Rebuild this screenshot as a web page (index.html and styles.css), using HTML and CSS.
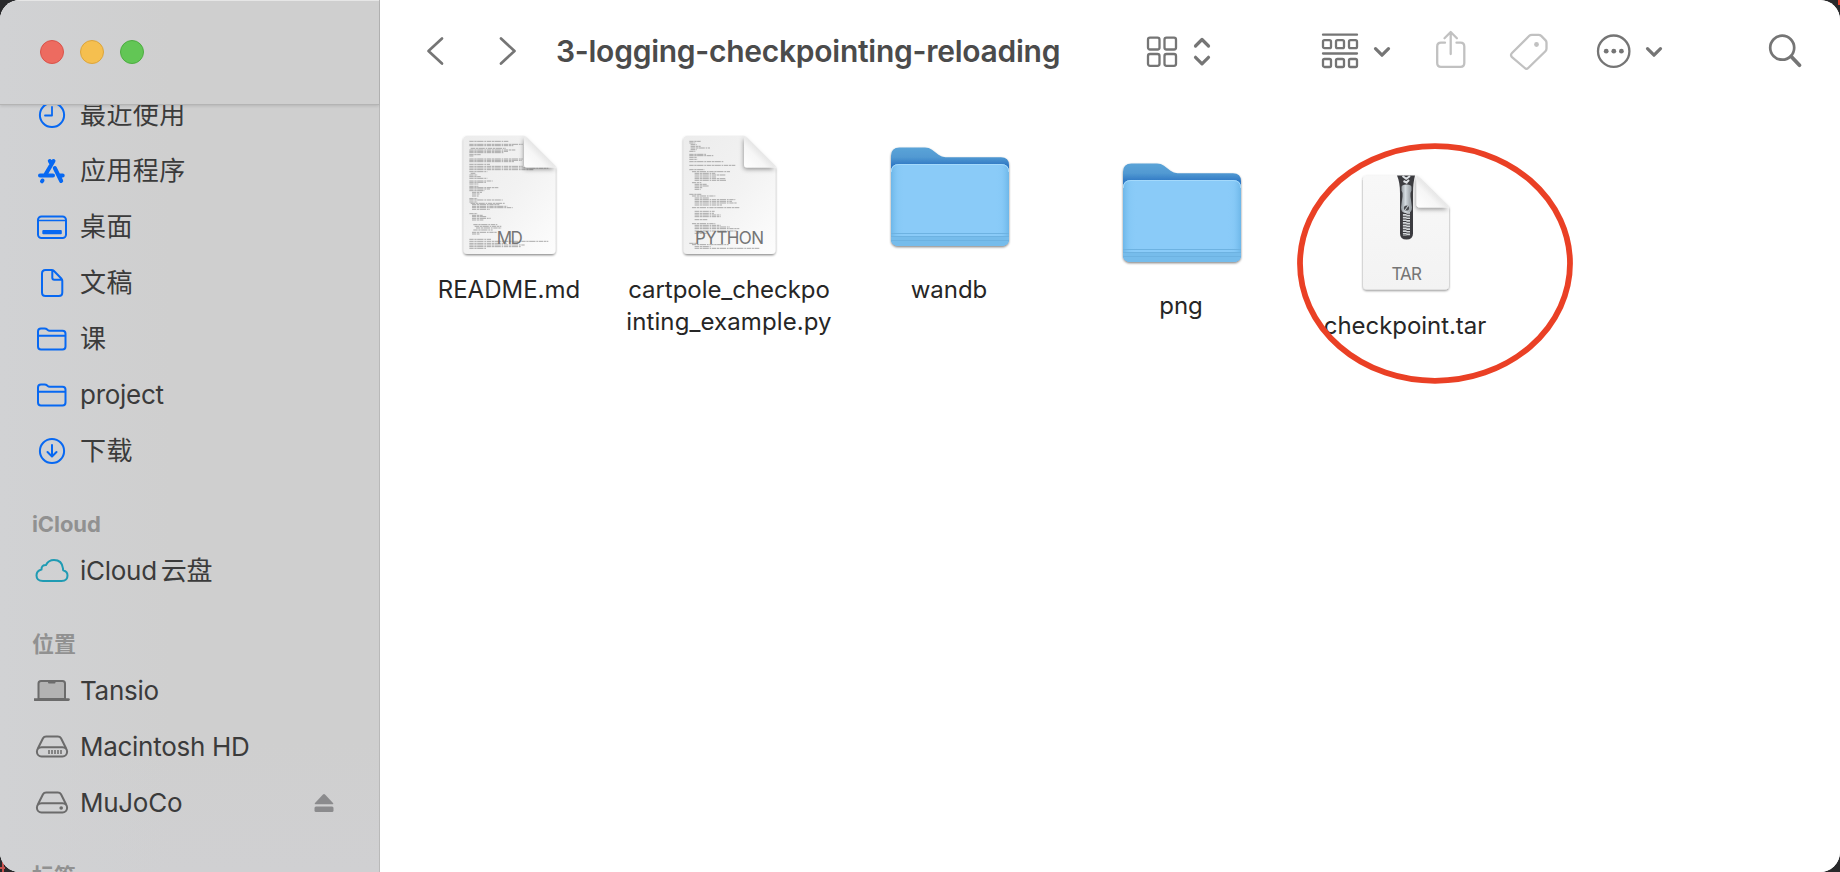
FILE: index.html
```html
<!DOCTYPE html>
<html lang="zh-CN">
<head>
<meta charset="utf-8">
<title>3-logging-checkpointing-reloading</title>
<link rel="stylesheet" href="styles.css">
</head>
<body>
<svg class="defs" width="0" height="0" aria-hidden="true">
  <defs>
    <linearGradient id="paper" x1="0" y1="0" x2="1" y2="1"><stop offset="0" stop-color="#ececec"/><stop offset=".5" stop-color="#f2f2f2"/><stop offset="1" stop-color="#fdfdfd"/></linearGradient>
    <linearGradient id="paperLight" x1="0" y1="0" x2="0" y2="1"><stop offset="0" stop-color="#f8f8f8"/><stop offset="1" stop-color="#f3f3f3"/></linearGradient>
    <linearGradient id="curl" x1="0" y1="1" x2=".6" y2=".4"><stop offset="0" stop-color="#ffffff"/><stop offset=".6" stop-color="#f6f6f6"/><stop offset="1" stop-color="#dedede"/></linearGradient>
    <linearGradient id="folderBack" x1="0" y1="0" x2="0" y2="1"><stop offset="0" stop-color="#5ba4d8"/><stop offset=".1" stop-color="#5199d2"/><stop offset=".18" stop-color="#2f78c4"/><stop offset="1" stop-color="#3b82c4"/></linearGradient>
    <linearGradient id="folderEdge" x1="0" y1="0" x2="1" y2="0"><stop offset="0" stop-color="#5aa9de" stop-opacity=".6"/><stop offset=".06" stop-color="#7cc3f2" stop-opacity=".3"/><stop offset=".12" stop-color="#8acbf8" stop-opacity="0"/><stop offset=".88" stop-color="#8acbf8" stop-opacity="0"/><stop offset=".94" stop-color="#7cc3f2" stop-opacity=".3"/><stop offset="1" stop-color="#5aa9de" stop-opacity=".6"/></linearGradient>
    <linearGradient id="metal" x1="0" y1="0" x2="1" y2="0"><stop offset="0" stop-color="#8e9499"/><stop offset=".4" stop-color="#d5dce1"/><stop offset="1" stop-color="#8b9196"/></linearGradient>
    <filter id="drop" x="-10%" y="-10%" width="120%" height="125%"><feDropShadow dx="0" dy="1.2" stdDeviation="1.1" flood-color="#000" flood-opacity=".48"/></filter>
    <filter id="soft" x="-30%" y="-30%" width="160%" height="170%"><feDropShadow dx="-.5" dy="2" stdDeviation="2" flood-color="#000" flood-opacity=".38"/></filter>
    <symbol id="folder" viewBox="0 0 128 128">
      <g filter="url(#drop)">
        <path d="M6 24q0-8.500 8.500-8.500H40q4 0 7 2.300l6.500 5q3 2.400 7 2.400h55.500q8 0 8 8V106q0 8-8 8H14q-8 0-8-8z" fill="url(#folderBack)"/>
        <path d="M6 40q0-8 8-8h102q8 0 8 8v66q0 8-8 8H14q-8 0-8-8z" fill="#8acbf8"/>
      </g>
      <path d="M6 40q0-8 8-8h102q8 0 8 8v66q0 8-8 8H14q-8 0-8-8z" fill="url(#folderEdge)"/>
      <path d="M6.300 40q0-7.500 7.700-7.500h102q7.700 0 7.700 7.500" fill="none" stroke="#a4d9fb" stroke-width="1"/>
      <path d="M6 104h118v2q0 8-8 8H14q-8 0-8-8z" fill="#76bceb"/>
      <path d="M6 101.500h118M6 104.500h118M6 108.500h118" stroke="#6db2e1" stroke-width="1"/>
    </symbol>
    <symbol id="drive" viewBox="0 0 36 28">
      <path d="M3.600 16 9 5.300Q10 3.400 12.200 3.400h11.600Q26 3.400 27 5.300L32.400 16M7.500 14.200h21a4.600 4.600 0 0 1 0 9.200h-21a4.600 4.600 0 0 1 0-9.200z" fill="none" stroke="currentColor" stroke-width="2"/>
    </symbol>
    <symbol id="dir" viewBox="0 0 36 28">
      <path d="M4 20.200V6.500Q4 3.500 7 3.500h3.500q1.600 0 2.700 1l.5.500q.8.700 2 .7H28.500q3 0 3 3v12.700q0 3-3 3H7q-3 0-3-3zM4 10.800h27.500" fill="none" stroke="currentColor" stroke-width="2"/>
    </symbol>
  </defs>
</svg>

<div class="window">
  <aside class="sidebar">
    <header class="titlebar">
      <span class="light close"></span><span class="light minimise"></span><span class="light maximise"></span>
    </header>
    <nav class="places">
      <div class="list">
        <a class="row zh"><svg class="ico" viewBox="0 0 36 28"><circle cx="18" cy="14" r="12.100" fill="none" stroke="currentColor" stroke-width="2"/><path d="M18 6v8.500h-7" fill="none" stroke="currentColor" stroke-width="1.800" stroke-linecap="round" stroke-linejoin="round"/></svg>最近使用</a>
        <a class="row zh"><svg class="ico" viewBox="0 0 36 28"><g fill="none" stroke="currentColor" stroke-width="4" stroke-linecap="round"><path d="M19.500 4 11.200 18M15.800 4l1.800 3M20.800 11 27.200 24M6 18.400h13M25.500 18.400h3.200M8.500 23.500l-.5.800"/></g></svg>应用程序</a>
        <a class="row zh"><svg class="ico" viewBox="0 0 36 28"><rect x="4" y="3.500" width="28" height="21.500" rx="3.500" fill="none" stroke="currentColor" stroke-width="2"/><path d="M4 7.500h28" stroke="currentColor" stroke-width="1.600"/><rect x="8.300" y="17" width="19.500" height="4.300" rx="1" fill="currentColor"/></svg>桌面</a>
        <a class="row zh"><svg class="ico" viewBox="0 0 36 28"><path d="M8 4.500Q8 1 11.500 1h6.200q1.300 0 2.300 1l7.300 7.500q1 1 1 2.300v11.700q0 3.500-3.500 3.500H11.500Q8 27 8 23.500zM18.300 1.500v7.300q0 2 2 2H28" fill="none" stroke="currentColor" stroke-width="2"/></svg>文稿</a>
        <a class="row zh"><svg class="ico"><use href="#dir"/></svg>课</a>
        <a class="row"><svg class="ico"><use href="#dir"/></svg>project</a>
        <a class="row zh"><svg class="ico" viewBox="0 0 36 28"><g fill="none" stroke="currentColor" stroke-width="2" stroke-linecap="round" stroke-linejoin="round"><circle cx="18" cy="14" r="12.100"/><path d="M18 8v11.300M13.500 15l4.500 4.500 4.500-4.500"/></g></svg>下载</a>
        <h2 class="heading">iCloud</h2>
        <a class="row cloud"><svg class="ico" viewBox="0 0 36 28"><path d="M9 24q-6.500 0-6.500-5.500 0-4.800 5-6-.2-4.500 4.500-4.500Q14.500 3 20 3q8 0 9 8.500 0 1 .2 1.800Q33.500 14.500 33.500 18.500q0 5.500-6 5.500z" fill="none" stroke="currentColor" stroke-width="2" stroke-linejoin="round"/></svg><span>iCloud</span><span class="han">云盘</span></a>
        <h2 class="heading">位置</h2>
        <a class="row device"><svg class="ico" viewBox="0 0 36 28"><path d="M4.500 22V6.500q0-2.500 2.500-2.500h21.500q2.500 0 2.500 2.500V22z" fill="#b2b2b2" stroke="currentColor" stroke-width="2"/><path d="M14 4h7.500v1.500q0 1-1 1H15q-1 0-1-1z" fill="currentColor"/><path d="M.5 22.600h34" stroke="currentColor" stroke-width="2.600" stroke-linecap="round"/></svg>Tansio</a>
        <a class="row device"><svg class="ico" viewBox="0 0 36 28"><use href="#drive"/><path d="M15 17v4M18 17v4M21 17v4M24 17v4M27 17v4" stroke="currentColor" stroke-width="1.500"/></svg>Macintosh HD</a>
        <a class="row device"><svg class="ico" viewBox="0 0 36 28"><use href="#drive"/><circle cx="27.200" cy="19" r="1.800" fill="currentColor"/></svg>MuJoCo<svg class="eject" viewBox="0 0 20 20"><path d="M9 1.500q1-1 2 0l8 8.500q1 1.300-.6 1.300H1.600Q0 11.300 1 10z"/><rect x=".5" y="13.500" width="19" height="5.500" rx="1.500"/></svg></a>
        <h2 class="heading">标签</h2>
      </div>
    </nav>
  </aside>

  <main class="browser">
    <header class="toolbar">
      <svg class="tool nav back" width="20" height="44" viewBox="0 0 20 44"><path d="M17 9.500 3.500 22 17 34.500"/></svg>
      <svg class="tool nav forward" width="20" height="44" viewBox="0 0 20 44"><path d="M3 9.500 16.500 22 3 34.500"/></svg>
      <h1 class="title">3-logging-checkpointing-reloading</h1>
      <svg class="tool grid" width="34" height="44" viewBox="0 0 34 44"><rect x="3" y="8.700" width="11.500" height="11.800" rx="2"/><rect x="19.500" y="8.700" width="11.500" height="11.800" rx="2"/><rect x="3" y="25" width="11.500" height="11.800" rx="2"/><rect x="19.500" y="25" width="11.500" height="11.800" rx="2"/></svg>
      <svg class="tool thick updown" width="20" height="44" viewBox="0 0 20 44"><path d="m3.500 17 6.500-6.500 6.500 6.500M3.500 28.300l6.500 6.500 6.500-6.500"/></svg>
      <svg class="tool group" width="40" height="44" viewBox="0 0 40 44"><path d="M3 5.700h34M3 24.500h34"/><g><rect x="3" y="11.200" width="8" height="8" rx="1.500"/><rect x="16" y="11.200" width="8" height="8" rx="1.500"/><rect x="29" y="11.200" width="8" height="8" rx="1.500"/><rect x="3" y="30" width="8" height="8" rx="1.500"/><rect x="16" y="30" width="8" height="8" rx="1.500"/><rect x="29" y="30" width="8" height="8" rx="1.500"/></g></svg>
      <svg class="tool thick drop1" width="20" height="44" viewBox="0 0 20 44"><path d="m3.500 19.700 6.500 6.500 6.500-6.500"/></svg>
      <svg class="tool faint share" width="33" height="44" viewBox="0 0 33 44"><path d="M11 13.700H7q-3.800 0-3.800 3.800V34q0 3.800 3.800 3.800h19.500q3.800 0 3.800-3.800V17.500q0-3.800-3.800-3.800h-4M16.700 25V4M10.500 9.200l6.200-6.200 6.200 6.200"/></svg>
      <svg class="tool faint tag" width="42" height="44" viewBox="0 0 42 44"><path d="M3.700 27.800q-1.500-2 .3-3.800L21.300 6.800q1-1 2.600-1h6.600q1.600 0 2.700 1.100l4.200 4.200q1.100 1.100 1.100 2.700v5.700q0 1.600-1.100 2.700L20.200 39q-1.700 1.700-3.400 0z"/><circle class="dot" cx="28.500" cy="15.500" r="2.400"/></svg>
      <svg class="tool more" width="38" height="44" viewBox="0 0 38 44"><circle cx="18.700" cy="22.200" r="15.700"/><circle class="dot" cx="11.200" cy="22.200" r="2.400"/><circle class="dot" cx="18.800" cy="22.200" r="2.400"/><circle class="dot" cx="26.400" cy="22.200" r="2.400"/></svg>
      <svg class="tool thick drop2" width="20" height="44" viewBox="0 0 20 44"><path d="m3.500 19.700 6.500 6.500 6.500-6.500"/></svg>
      <svg class="tool nav search" width="36" height="44" viewBox="0 0 36 44"><circle cx="15.200" cy="18.700" r="12"/><path class="handle" d="m24.200 27.500 8.300 8.700"/></svg>
    </header>

    <section class="files">
      <figure class="file">
        <svg class="art" viewBox="0 0 128 128">
          <path filter="url(#drop)" d="M22.500 4H79l31.500 31.500V118q0 4-4 4h-84q-4 0-4-4V8q0-4 4-4z" fill="url(#paper)"/>
          <g class="code" transform="translate(-15 -12) scale(.3333)">
            <path d="M118 64H236M118 73H278M118 77H250M122 85H228M118 90H256M118 94H234M118 98H222M118 104H152M118 108H130M118 117H278M118 121H276M118 125H252M118 133H180M118 139H278M118 144H355M118 149H310"/>
            <path d="M118 155H172M122 160H138M118 165H142M118 170H152M118 175H172M118 183H188M118 187H170M118 192H145M118 199H145M118 203H205M118 207H180M118 212H164M126 217H156M126 222H150M126 228H146"/>
            <path d="M118 236H142M118 240H218M118 246H142M122 250H224M126 254H208M126 259H232M126 263H248M126 268H180M118 281H142M126 286H158M126 290H170M126 295H182M126 300H160M130 314H202M134 319H214M138 324H214M130 330H188M126 337H200M126 342H150M118 358H184M118 364H355M118 370H230M118 375H284M118 380H272M118 385H168"/>
          </g>
          <path filter="url(#soft)" d="M79 4l31.500 31.500H82q-3 0-3-3z" fill="url(#curl)"/>
          <text class="kind" x="64.800" y="112" textLength="26">MD</text>
        </svg>
        <figcaption>README.md</figcaption>
      </figure>
      <figure class="file">
        <svg class="art" viewBox="0 0 128 128">
          <path filter="url(#drop)" d="M22.500 4H79l31.500 31.500V118q0 4-4 4h-84q-4 0-4-4V8q0-4 4-4z" fill="url(#paper)"/>
          <g class="code" transform="translate(-235 -12) scale(.3333)">
            <path d="M778 64H812M778 69H796M782 74H800M782 79H812M782 84H840M782 89H800M778 94H796M778 103H828M778 107H850M778 112H800M778 118H802M778 125H882M778 136H916M778 149H824M786 155H900M794 160H856M794 165H886M794 171H858M794 176H886M794 181H888M786 188H814M794 193H830M794 198H836M794 203H818M794 208H812"/>
            <path d="M778 223H814M786 228H856M794 234H838M794 239H916M794 244H906M794 249H920M794 255H876M786 263H928M794 274H854M794 280H852M794 285H872M794 290H872M794 299H832M786 311H856M794 316H872M794 321H900M794 326H928M794 333H920M794 340H830M778 370H800M786 374H896M794 380H842M794 385H988"/>
          </g>
          <path filter="url(#soft)" d="M79 4l31.500 31.500H82q-3 0-3-3z" fill="url(#curl)"/>
          <text class="kind" x="64.500" y="112" textLength="69">PYTHON</text>
        </svg>
        <figcaption class="tight">cartpole_checkpo<br><span class="wide">inting_example.py</span></figcaption>
      </figure>
      <figure class="file">
        <svg class="art"><use href="#folder"/></svg>
        <figcaption class="tight">wandb</figcaption>
      </figure>
      <figure class="file png">
        <svg class="art"><use href="#folder"/></svg>
        <figcaption>png</figcaption>
      </figure>
      <figure class="file tar">
        <svg class="art" viewBox="0 0 128 128">
          <path filter="url(#drop)" d="M25.500 7.500H75l33 32V117.500q0 4-4 4H25.500q-3.500 0-3.500-4V11.500q0-4 3.500-4z" fill="url(#paperLight)"/>
          <path d="M56 7.500h18q-2 7-2 18v40q0 6-6.500 6T59 65.500V25Q59 14 56 7.500z" fill="#3c3c40"/>
          <path d="M61.500 8l4 3M69 8l-4 3M62.500 13l4 2M68 12l-3 3" stroke="#dfe3e6" stroke-width="2"/>
          <path d="M63.700 46v22M67.200 44v24" stroke="#d3d7da" stroke-width="3.600" stroke-dasharray="1.700 1"/>
          <path d="M60.500 19q0-2.500 5-2.500t5 2.500v3.500q-1.500 2-1 6l1.500 11q0 5.500-5.500 5.500T60 39.500l1.500-11q.5-4-1-6z" fill="url(#metal)"/>
          <circle cx="65.500" cy="40" r="2.600" fill="#4a4c50"/><path d="m64 42 3-4" stroke="#cfd4d8"/>
          <path filter="url(#soft)" d="M75.500 7.500l32 32H78.500q-3 0-3-3z" fill="url(#curl)"/>
          <text class="kind" x="65.700" y="112" textLength="30.500">TAR</text>
        </svg>
        <figcaption class="tight">checkpoint.tar</figcaption>
      </figure>
    </section>
    <svg class="marker" viewBox="0 0 276 241"><ellipse cx="138" cy="120.500" rx="135" ry="117.300"/></svg>
  </main>
</div>
</body>
</html>
```
FILE: styles.css
```css
* { box-sizing: border-box; }
body {
  margin: 0;
  height: 872px;
  background:
    linear-gradient(#c4514d, #c4514d) 0 867px / 5px 2px no-repeat,
    linear-gradient(#c4514d, #c4514d) 2px 862px / 2px 10px no-repeat,
    linear-gradient(#e0402c, #e0402c) 1838px 0 / 2px 5px no-repeat,
    #29292b;
  overflow: hidden;
  font-family: Inter, "Noto Sans CJK SC", sans-serif;
}
.defs { position: absolute; }
.window {
  display: flex;
  width: 1840px;
  height: 872px;
  border-radius: 20px;
  overflow: hidden;
  position: relative;
  background: #fff;
}

.sidebar {
  display: flex;
  flex-direction: column;
  width: 380px;
  background: linear-gradient(90deg, #d1d2d4, rgba(208, 208, 209, 0) 45%), linear-gradient(#cfcfcf, #cfcfcf 85%, #d0d0d2);
  border-right: 1px solid #b9b9b9;
}
.titlebar {
  display: flex;
  gap: 16px;
  flex: none;
  height: 105px;
  padding: 40px 0 0 40px;
  border-top: 1px solid #e6e6e6;
  border-bottom: 1px solid #b4b4b4;
  box-shadow: 0 1px 3px rgba(0, 0, 0, .13);
}
.light { width: 24px; height: 24px; margin-top: -1px; border-radius: 50%; border: 1px solid; }
.close { background: #ed6b60; border-color: #d9534a; }
.minimise { background: #f5bf4f; border-color: #dca53c; }
.maximise { background: #62c655; border-color: #4dad41; }

.places { flex: 1; min-height: 0; overflow: hidden; }
.list { margin-top: -18px; }
.row {
  display: flex;
  align-items: center;
  height: 56px;
  padding: 0 45px 0 34px;
  font-size: 26px;
  line-height: 56px;
  letter-spacing: -.28px;
  color: #3b3b3b;
  white-space: nowrap;
}
.zh { letter-spacing: .4px; }
.ico { flex: none; width: 36px; height: 28px; margin-right: 10px; color: #0768f2; }
.cloud .ico { color: #1f9bb3; }
.device .ico { color: #6b6b6b; }
.han { margin-left: 4px; }
.heading {
  height: 64px;
  margin: 0;
  padding: 26px 0 0 32px;
  font-size: 22px;
  line-height: 38px;
  font-weight: 700;
  letter-spacing: -.1px;
  color: #919191;
}
.eject { width: 20px; height: 20px; margin-left: auto; fill: #8b8b8d; }

.browser { flex: 1; position: relative; background: #fff; }
.toolbar { display: flex; align-items: center; height: 102px; }
.tool {
  flex: none;
  fill: none;
  stroke: #757575;
  stroke-width: 2.3;
  stroke-linecap: round;
  stroke-linejoin: round;
}
.tool .dot { fill: #757575; stroke: none; }
.nav { stroke-width: 2.7; }
.thick { stroke-width: 3.2; }
.faint { stroke: #c1c1c1; }
.tool.faint .dot { fill: #c1c1c1; }
.handle { stroke-width: 3.8; }
.back { margin-left: 45px; }
.forward { margin-left: 53px; }
.title {
  width: 510px;
  margin: 0 0 0 38px;
  font-size: 30px;
  font-weight: 600;
  line-height: 40px;
  letter-spacing: -.26px;
  color: #4b4b4b;
  white-space: nowrap;
}
.grid { margin-left: 79px; }
.updown { margin-left: 13px; }
.group { margin-left: 108px; }
.drop1 { margin-left: 12px; }
.share { margin-left: 42px; }
.tag { margin-left: 41px; }
.more { margin-left: 45px; }
.drop2 { margin-left: 11px; }
.search { margin-left: 103px; }

.files { display: flex; align-items: flex-start; padding: 30px 0 0 19px; }
.file {
  display: flex;
  flex-direction: column;
  align-items: center;
  gap: 14px;
  flex: none;
  width: 220px;
  margin: 0;
}
.file.png { margin: 16px 0 0 12px; }
.file.tar { margin: 36px 0 0 4px; }
.art { width: 128px; height: 128px; }
.code path { fill: none; stroke: #9a9a9a; stroke-width: 2.5; stroke-dasharray: 13 2 7 1.500 19 2.500 5 2; }
.kind { font: 17px Inter, sans-serif; fill: #757575; text-anchor: middle; }
figcaption { font-size: 24px; line-height: 32px; color: #262626; text-align: center; white-space: nowrap; }
.tight { letter-spacing: -.05px; }
.wide { letter-spacing: .1px; }
.marker { position: absolute; left: 917px; top: 143px; width: 276px; height: 241px; fill: none; stroke: #ea4025; stroke-width: 5.8; }
```
